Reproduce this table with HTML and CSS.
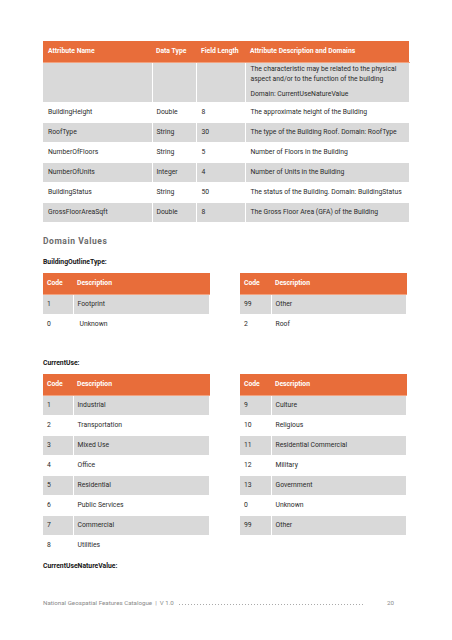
FILE: index.html
```html
<!DOCTYPE html>
<html>
<head>
<meta charset="utf-8">
<link rel="stylesheet" href="styles.css">
</head>
<body>
<div class="page">
  <table class="attr">
    <colgroup><col class="c1"><col class="c2"><col class="c3"><col class="c4"></colgroup>
    <thead>
      <tr><th>Attribute Name</th><th>Data Type</th><th>Field Length</th><th>Attribute Description and Domains</th></tr>
    </thead>
    <tbody>
      <tr class="g tall"><td></td><td></td><td></td><td><p class="desc">The characteristic may be related to the physical aspect and/or to the function of the building</p><p class="dom">Domain: CurrentUseNatureValue</p></td></tr>
      <tr><td>BuildingHeight</td><td>Double</td><td>8</td><td>The approximate height of the Building</td></tr>
      <tr class="g"><td>RoofType</td><td>String</td><td>30</td><td>The type of the Building Roof. Domain: RoofType</td></tr>
      <tr><td>NumberOfFloors</td><td>String</td><td>5</td><td>Number of Floors in the Building</td></tr>
      <tr class="g"><td>NumberOfUnits</td><td>Integer</td><td>4</td><td>Number of Units in the Building</td></tr>
      <tr><td>BuildingStatus</td><td>String</td><td>50</td><td>The status of the Building. Domain: BuildingStatus</td></tr>
      <tr class="g"><td>GrossFloorAreaSqft</td><td>Double</td><td>8</td><td>The Gross Floor Area (GFA) of the Building</td></tr>
    </tbody>
  </table>

  <h2 class="heading">Domain Values</h2>

  <div class="label lbl1">BuildingOutlineType:</div>
  <div class="pair">
    <table class="dv">
      <thead><tr><th class="code">Code</th><th>Description</th></tr></thead>
      <tbody>
        <tr class="g"><td>1</td><td>Footprint</td></tr>
        <tr><td>0</td><td class="shift">Unknown</td></tr>
      </tbody>
    </table>
    <table class="dv right">
      <thead><tr><th class="code">Code</th><th>Description</th></tr></thead>
      <tbody>
        <tr class="g"><td>99</td><td>Other</td></tr>
        <tr><td>2</td><td>Roof</td></tr>
      </tbody>
    </table>
  </div>

  <div class="label lbl2">CurrentUse:</div>
  <div class="pair">
    <table class="dv">
      <thead><tr><th class="code">Code</th><th>Description</th></tr></thead>
      <tbody>
        <tr class="g"><td>1</td><td>Industrial</td></tr>
        <tr><td>2</td><td>Transportation</td></tr>
        <tr class="g"><td>3</td><td>Mixed Use</td></tr>
        <tr><td>4</td><td>Office</td></tr>
        <tr class="g"><td>5</td><td>Residential</td></tr>
        <tr><td>6</td><td>Public Services</td></tr>
        <tr class="g"><td>7</td><td>Commercial</td></tr>
        <tr><td>8</td><td>Utilities</td></tr>
      </tbody>
    </table>
    <table class="dv right">
      <thead><tr><th class="code">Code</th><th>Description</th></tr></thead>
      <tbody>
        <tr class="g"><td>9</td><td>Culture</td></tr>
        <tr><td>10</td><td>Religious</td></tr>
        <tr class="g"><td>11</td><td>Residential Commercial</td></tr>
        <tr><td>12</td><td>Military</td></tr>
        <tr class="g"><td>13</td><td>Government</td></tr>
        <tr><td>0</td><td>Unknown</td></tr>
        <tr class="g"><td>99</td><td>Other</td></tr>
      </tbody>
    </table>
  </div>

  <div class="label lbl3">CurrentUseNatureValue:</div>

  <footer class="footer">
    <span class="ftitle">National Geospatial Features Catalogue &nbsp;|&nbsp; V 1.0</span>
    <span class="leader"></span>
    <span class="pno">20</span>
  </footer>
</div>
</body>
</html>
```

FILE: styles.css
```css
* { box-sizing: border-box; }
html, body { margin: 0; padding: 0; background: #fff; }
body { font-family: Roboto, "Liberation Sans", Arial, sans-serif; color: #2a2a2a; }

.page {
  width: 452px;
  height: 640px;
  padding: 41px 0 0 43px;
}

table { border-collapse: collapse; table-layout: fixed; font-size: 6.8px; color: #2a2a2a; }
th {
  background: #e86d3a;
  color: #fff;
  font-weight: 700;
  text-align: left;
  height: 21px;
  padding: 0 5px;
  border-bottom: 1px solid #f2a27f;
}
td {
  height: 20px;
  padding: 0 5px;
  border: 1px solid #fff;
  border-top: 0;
  border-bottom: 0;
  vertical-align: middle;
  white-space: nowrap;
}
td:first-child { border-left: 0; }
tr.g td { background: #d9d9d9; border-top: 1px solid #fff; }

.attr { width: 366px; }
.attr col.c1 { width: 109px; }
.attr col.c2 { width: 44px; }
.attr col.c3 { width: 49px; }
.attr col.c4 { width: 164px; }
.attr th:nth-child(2), .attr td:nth-child(2) { padding-left: 4px; }
.attr tr.tall td { height: 40px; vertical-align: top; white-space: normal; padding-top: 1px; }
.desc { margin: 0; line-height: 10.3px; }
.dom { margin: 5px 0 0; line-height: 10px; }

.heading {
  margin: 13px 0 0;
  font-size: 8.5px;
  line-height: 12px;
  font-weight: 700;
  letter-spacing: 0.55px;
  color: #6b6b6b;
}

.label {
  font-size: 6.8px;
  line-height: 10px;
  font-weight: 700;
  color: #151515;
}
.lbl1 { margin-top: 10px; }
.lbl2 { margin-top: 24px; }
.lbl3 { margin-top: 6px; }

.pair {
  display: flex;
  gap: 30px;
  align-items: flex-start;
  margin-top: 6px;
}
.dv { width: 167px; }
.dv th.code { width: 30px; padding-left: 4px; }
.dv td:first-child { padding-left: 4px; }
.dv th:nth-child(2), .dv td:nth-child(2) { padding-left: 4px; }
.dv.right th.code { width: 31px; }
.dv td.shift { padding-left: 6px; }

.footer {
  display: flex;
  align-items: center;
  margin-top: 27px;
  width: 351px;
  font-size: 6.2px;
  line-height: 10px;
  color: #8a8a8a;
}
.ftitle { white-space: nowrap; }
.leader {
  flex: 0 0 186px;
  margin-left: 4px;
  height: 1px;
  align-self: center;
  margin-top: 3px;
  background-image: radial-gradient(circle, #aaa 0.5px, transparent 0.6px);
  background-size: 3px 1px;
  background-repeat: repeat-x;
}
.pno { margin-left: auto; }
```
